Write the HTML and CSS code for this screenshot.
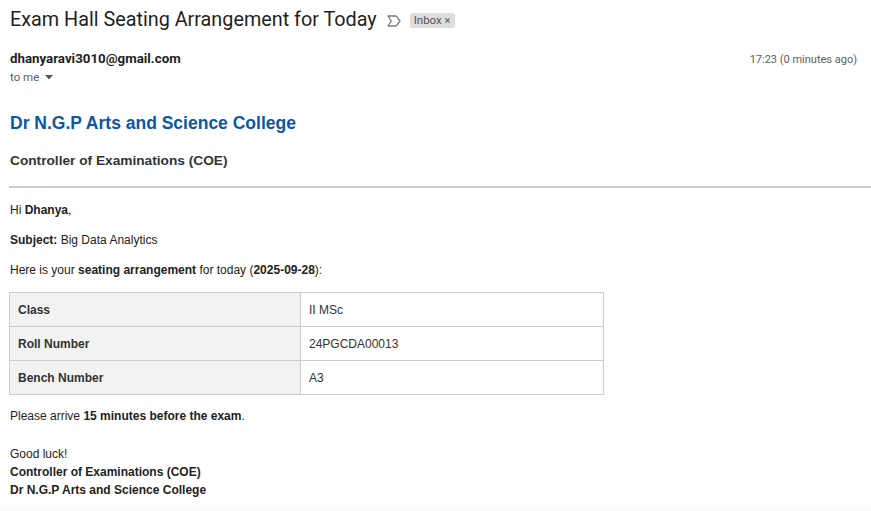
FILE: index.html
```html
<!DOCTYPE html>
<html>
<head>
<meta charset="utf-8">
<link rel="stylesheet" href="styles.css">
</head>
<body>
<div class="page">
  <div class="subject-row">
    <h1 class="subject">Exam Hall Seating Arrangement for Today</h1>
    <svg class="important" width="14" height="12" viewBox="0 0 14 12"><path d="M1 1 H8.5 Q9.3 1 9.8 1.6 L13 6 L9.8 10.4 Q9.3 11 8.5 11 H1 L4.3 6 Z" fill="none" stroke="#7a7a7a" stroke-width="1.3" stroke-linejoin="round"/></svg>
    <span class="chip">Inbox <span class="chip-x">×</span></span>
  </div>
  <div class="sender-row">
    <div class="sender">
      <div class="from">dhanyaravi3010@gmail.com</div>
      <div class="tome">to me <svg class="caret" width="8" height="5" viewBox="0 0 8 5"><path d="M0 0 H8 L4 4.5 Z" fill="#555"/></svg></div>
    </div>
    <div class="time">17:23 (0 minutes ago)</div>
  </div>
  <div class="mail">
    <h2 class="college">Dr N.G.P Arts and Science College</h2>
    <h3 class="coe">Controller of Examinations (COE)</h3>
    <hr class="rule">
    <p>Hi <b>Dhanya</b>,</p>
    <p><b>Subject:</b> Big Data Analytics</p>
    <p>Here is your <b>seating arrangement</b> for today (<b>2025-09-28</b>):</p>
    <table class="seat">
      <tr><th>Class</th><td>II MSc</td></tr>
      <tr><th>Roll Number</th><td>24PGCDA00013</td></tr>
      <tr><th>Bench Number</th><td>A3</td></tr>
    </table>
    <p class="arrive">Please arrive <b>15 minutes before the exam</b>.</p>
    <p class="sign">Good luck!<br><b>Controller of Examinations (COE)</b><br><b>Dr N.G.P Arts and Science College</b></p>
  </div>
</div>
<div class="footer-band"></div>
</body>
</html>
```
FILE: styles.css
```css
html, body {
  margin: 0;
  padding: 0;
  background: #fff;
}
body {
  font-family: "Liberation Sans", Arial, sans-serif;
  color: #222;
  height: 511px;
  overflow: hidden;
  position: relative;
}
.page {
  padding-left: 10px;
}
.subject-row {
  display: flex;
  align-items: center;
  height: 40px;
}
.subject {
  font-family: Roboto, "Open Sans", sans-serif;
  font-weight: 400;
  font-size: 19.8px;
  color: #1f1f1f;
  margin: 0;
  line-height: 28px;
}
.important {
  margin-left: 10px;
  margin-top: 1px;
}
.chip {
  margin-left: 9px;
  background: #dddddd;
  color: #555;
  font-family: Roboto, sans-serif;
  font-size: 11.5px;
  line-height: 15px;
  padding: 0 5px 0 4px;
  border-radius: 3px;
}
.chip-x {
  font-size: 11px;
  color: #555;
}
.sender-row {
  display: flex;
  justify-content: space-between;
  margin-top: 9px;
  padding-right: 14px;
}
.from {
  font-family: Roboto, sans-serif;
  font-weight: 700;
  font-size: 13.3px;
  color: #1f1f1f;
  line-height: 20px;
}
.tome {
  font-family: Roboto, sans-serif;
  font-size: 11.5px;
  color: #5e5e5e;
  line-height: 16px;
}
.caret {
  margin-left: 3px;
  vertical-align: middle;
}
.time {
  font-family: Roboto, sans-serif;
  font-size: 11px;
  color: #5e5e5e;
  line-height: 20px;
  padding-top: 1px;
}
.mail {
  padding-top: 27px;
  font-size: 12px;
  color: #222;
}
.college {
  margin: 0;
  font-size: 17.5px;
  font-weight: 700;
  color: #0b57a4;
  line-height: 22px;
}
.coe {
  margin: 19px 0 0;
  font-size: 13.7px;
  font-weight: 700;
  color: #333;
  line-height: 16px;
}
.rule {
  border: 0;
  border-top: 2px solid #cccccc;
  margin: 17px 0 0 -1px;
  height: 0;
}
.mail p {
  margin: 14px 0 0;
  line-height: 16px;
}
.seat {
  margin: 14px 0 0 -1px;
  border-collapse: collapse;
  width: 595px;
  font-size: 12px;
}
.seat th, .seat td {
  border: 1px solid #cccccc;
  height: 33px;
  padding: 0 8px;
  text-align: left;
}
.seat th {
  width: 274px;
  background: #f2f2f2;
  font-weight: 700;
  color: #333;
}
.seat td {
  color: #333;
}
.mail p.arrive {
  margin-top: 13px;
}
.mail p.sign {
  margin-top: 21px;
  line-height: 18px;
}
.footer-band {
  position: absolute;
  left: 0;
  right: 0;
  bottom: 0;
  height: 4px;
  background: #f8fafd;
}
```
